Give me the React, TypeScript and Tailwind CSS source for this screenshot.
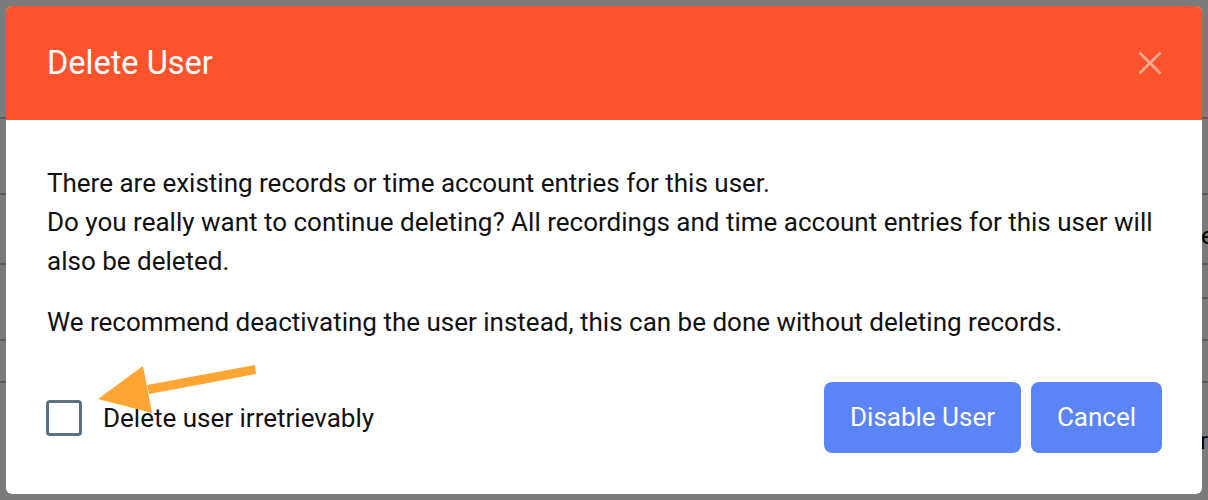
import React from "react";

export default function App() {
  const lines = [117, 193, 263, 339, 381];
  return (
    <div
      className="relative h-[500px] w-[1208px] overflow-hidden bg-[#7b7b7b]"
      style={{ fontFamily: "Roboto, 'Noto Sans', sans-serif" }}
    >
      {/* page behind the overlay */}
      <div className="absolute inset-0">
        {lines.map((y) => (
          <div key={y} className="absolute left-0 right-0 h-[2px] bg-[#5e5e5e]" style={{ top: y }} />
        ))}
        <div className="absolute right-0 left-[1100px] top-[297px] h-[2px] bg-[#5e5e5e]" />
        <span className="absolute left-[1201px] top-[218px] text-[24px] text-black">e</span>
        <span className="absolute left-[1200px] top-[423px] text-[24px] text-black">r</span>
      </div>

      {/* modal */}
      <div className="absolute left-[6px] top-[6px] right-[6px] bottom-[6px] flex flex-col overflow-hidden rounded-[6px] bg-white">
        <div className="flex h-[114px] shrink-0 items-center justify-between bg-[#fc532d] pl-[41px] pr-[40px]">
          <h1 className="text-[32.5px] font-normal leading-none text-white">Delete User</h1>
          <svg width="24" height="24" viewBox="0 0 24 24" className="text-white/50">
            <path d="M1.5 1.5 L22.5 22.5 M22.5 1.5 L1.5 22.5" stroke="currentColor" strokeWidth="2.6" strokeLinecap="butt" />
          </svg>
        </div>
        <div className="flex flex-1 flex-col px-[40px] pt-[44px] pb-[41px] text-[26px] leading-[39px] text-[#111]">
          <p className="pl-[1px]">
            There are existing records or time account entries for this user.
            <br />
            Do you really want to continue deleting? All recordings and time account entries for this user will also be deleted.
          </p>
          <p className="mt-[22px] pl-[1px]">
            We recommend deactivating the user instead, this can be done without deleting records.
          </p>
          <div className="mt-auto flex items-center justify-between">
            <label className="flex items-center gap-[21px]">
              <span className="block h-[36px] w-[36px] rounded-[4px] border-[3px] border-[#5b7283]" />
              <span className="text-[26px] leading-none text-[#111]">Delete user irretrievably</span>
            </label>
            <div className="flex gap-[10px]">
              <button className="h-[71px] w-[197px] rounded-[8px] bg-[#5b84f8] text-[26px] text-white">Disable User</button>
              <button className="h-[71px] w-[131px] rounded-[8px] bg-[#5b84f8] text-[26px] text-white">Cancel</button>
            </div>
          </div>
        </div>
      </div>

      {/* annotation arrow */}
      <svg className="pointer-events-none absolute left-0 top-0" width="1208" height="500">
        <path d="M147 385 L255 365 L256 374 L149 394 Z" fill="#ffa533" />
        <path d="M98 399 L143 366 L152 413 Z" fill="#ffa533" />
      </svg>
    </div>
  );
}
